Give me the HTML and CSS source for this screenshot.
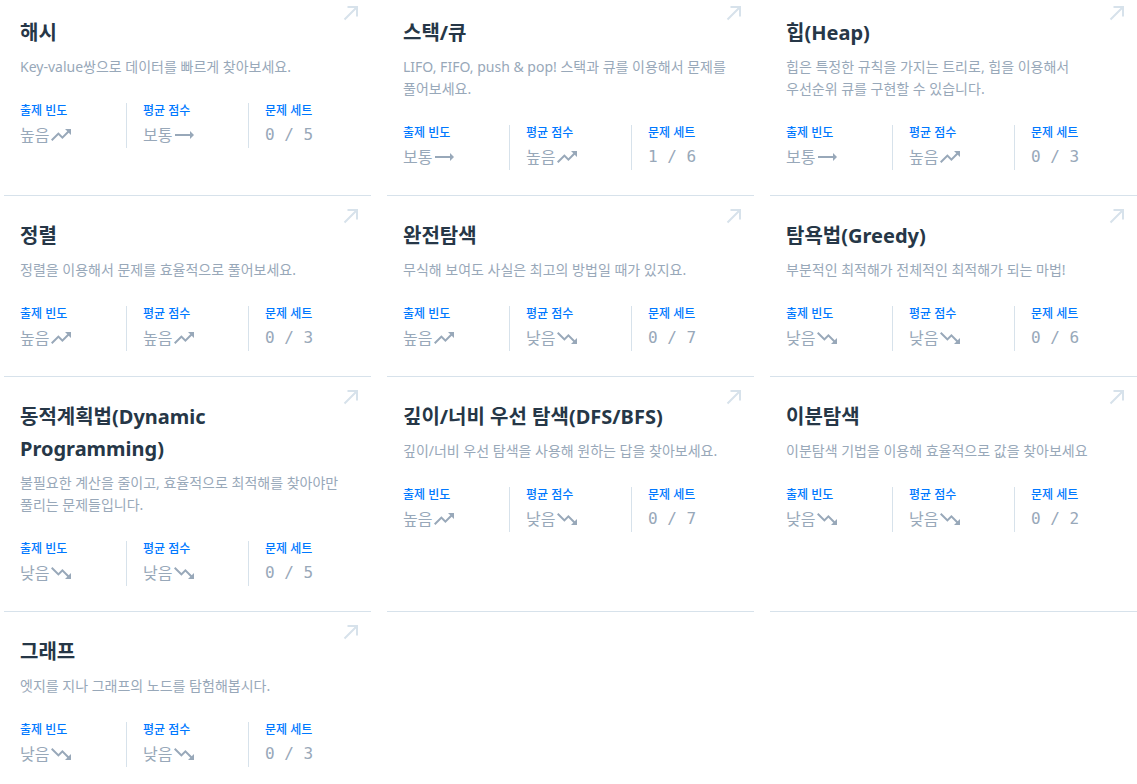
FILE: index.html
```html
<!DOCTYPE html>
<html lang="ko">
<head>
<meta charset="utf-8">
<title>문제 유형</title>
<link rel="stylesheet" href="styles.css">
</head>
<body>
<svg width="0" height="0" class="defs">
  <defs>
    <symbol id="ic-up" viewBox="0 0 24 24"><path d="M16 6l2.29 2.29-4.88 4.88-4-4L2 16.59 3.41 18l6-6 4 4 6.3-6.29L22 12V6z"/></symbol>
    <symbol id="ic-down" viewBox="0 0 24 24"><path d="M16 18l2.29-2.29-4.88-4.88-4 4L2 7.41 3.41 6l6 6 4-4 6.3 6.29L22 12v6z"/></symbol>
    <symbol id="ic-flat" viewBox="0 0 24 24"><path d="M22 12l-4-4v3H3v2h15v3z"/></symbol>
    <symbol id="ic-link" viewBox="0 0 16 16"><path d="M1.5 14.5L14 2M4.5 2H14V11.5" fill="none" stroke-width="2"/></symbol>
  </defs>
</svg>
<main class="grid">
  <a class="card">
    <svg class="link"><use href="#ic-link"/></svg>
    <h3 class="title">해시</h3>
    <p class="desc">Key-value쌍으로 데이터를 빠르게 찾아보세요.</p>
    <div class="stats">
      <div class="stat"><div class="label">출제 빈도</div><div class="value">높음<svg class="trend"><use href="#ic-up"/></svg></div></div>
      <div class="stat"><div class="label">평균 점수</div><div class="value">보통<svg class="trend"><use href="#ic-flat"/></svg></div></div>
      <div class="stat"><div class="label">문제 세트</div><div class="value mono">0 / 5</div></div>
    </div>
  </a>
  <a class="card">
    <svg class="link"><use href="#ic-link"/></svg>
    <h3 class="title">스택/큐</h3>
    <p class="desc">LIFO, FIFO, push &amp; pop! 스택과 큐를 이용해서 문제를 풀어보세요.</p>
    <div class="stats">
      <div class="stat"><div class="label">출제 빈도</div><div class="value">보통<svg class="trend"><use href="#ic-flat"/></svg></div></div>
      <div class="stat"><div class="label">평균 점수</div><div class="value">높음<svg class="trend"><use href="#ic-up"/></svg></div></div>
      <div class="stat"><div class="label">문제 세트</div><div class="value mono">1 / 6</div></div>
    </div>
  </a>
  <a class="card">
    <svg class="link"><use href="#ic-link"/></svg>
    <h3 class="title">힙(Heap)</h3>
    <p class="desc">힙은 특정한 규칙을 가지는 트리로, 힙을 이용해서 우선순위 큐를 구현할 수 있습니다.</p>
    <div class="stats">
      <div class="stat"><div class="label">출제 빈도</div><div class="value">보통<svg class="trend"><use href="#ic-flat"/></svg></div></div>
      <div class="stat"><div class="label">평균 점수</div><div class="value">높음<svg class="trend"><use href="#ic-up"/></svg></div></div>
      <div class="stat"><div class="label">문제 세트</div><div class="value mono">0 / 3</div></div>
    </div>
  </a>
  <a class="card">
    <svg class="link"><use href="#ic-link"/></svg>
    <h3 class="title">정렬</h3>
    <p class="desc">정렬을 이용해서 문제를 효율적으로 풀어보세요.</p>
    <div class="stats">
      <div class="stat"><div class="label">출제 빈도</div><div class="value">높음<svg class="trend"><use href="#ic-up"/></svg></div></div>
      <div class="stat"><div class="label">평균 점수</div><div class="value">높음<svg class="trend"><use href="#ic-up"/></svg></div></div>
      <div class="stat"><div class="label">문제 세트</div><div class="value mono">0 / 3</div></div>
    </div>
  </a>
  <a class="card">
    <svg class="link"><use href="#ic-link"/></svg>
    <h3 class="title">완전탐색</h3>
    <p class="desc">무식해 보여도 사실은 최고의 방법일 때가 있지요.</p>
    <div class="stats">
      <div class="stat"><div class="label">출제 빈도</div><div class="value">높음<svg class="trend"><use href="#ic-up"/></svg></div></div>
      <div class="stat"><div class="label">평균 점수</div><div class="value">낮음<svg class="trend"><use href="#ic-down"/></svg></div></div>
      <div class="stat"><div class="label">문제 세트</div><div class="value mono">0 / 7</div></div>
    </div>
  </a>
  <a class="card">
    <svg class="link"><use href="#ic-link"/></svg>
    <h3 class="title">탐욕법(Greedy)</h3>
    <p class="desc">부분적인 최적해가 전체적인 최적해가 되는 마법!</p>
    <div class="stats">
      <div class="stat"><div class="label">출제 빈도</div><div class="value">낮음<svg class="trend"><use href="#ic-down"/></svg></div></div>
      <div class="stat"><div class="label">평균 점수</div><div class="value">낮음<svg class="trend"><use href="#ic-down"/></svg></div></div>
      <div class="stat"><div class="label">문제 세트</div><div class="value mono">0 / 6</div></div>
    </div>
  </a>
  <a class="card">
    <svg class="link"><use href="#ic-link"/></svg>
    <h3 class="title">동적계획법(Dynamic Programming)</h3>
    <p class="desc">불필요한 계산을 줄이고, 효율적으로 최적해를 찾아야만 풀리는 문제들입니다.</p>
    <div class="stats">
      <div class="stat"><div class="label">출제 빈도</div><div class="value">낮음<svg class="trend"><use href="#ic-down"/></svg></div></div>
      <div class="stat"><div class="label">평균 점수</div><div class="value">낮음<svg class="trend"><use href="#ic-down"/></svg></div></div>
      <div class="stat"><div class="label">문제 세트</div><div class="value mono">0 / 5</div></div>
    </div>
  </a>
  <a class="card">
    <svg class="link"><use href="#ic-link"/></svg>
    <h3 class="title">깊이/너비 우선 탐색(DFS/BFS)</h3>
    <p class="desc">깊이/너비 우선 탐색을 사용해 원하는 답을 찾아보세요.</p>
    <div class="stats">
      <div class="stat"><div class="label">출제 빈도</div><div class="value">높음<svg class="trend"><use href="#ic-up"/></svg></div></div>
      <div class="stat"><div class="label">평균 점수</div><div class="value">낮음<svg class="trend"><use href="#ic-down"/></svg></div></div>
      <div class="stat"><div class="label">문제 세트</div><div class="value mono">0 / 7</div></div>
    </div>
  </a>
  <a class="card">
    <svg class="link"><use href="#ic-link"/></svg>
    <h3 class="title">이분탐색</h3>
    <p class="desc">이분탐색 기법을 이용해 효율적으로 값을 찾아보세요</p>
    <div class="stats">
      <div class="stat"><div class="label">출제 빈도</div><div class="value">낮음<svg class="trend"><use href="#ic-down"/></svg></div></div>
      <div class="stat"><div class="label">평균 점수</div><div class="value">낮음<svg class="trend"><use href="#ic-down"/></svg></div></div>
      <div class="stat"><div class="label">문제 세트</div><div class="value mono">0 / 2</div></div>
    </div>
  </a>
  <a class="card">
    <svg class="link"><use href="#ic-link"/></svg>
    <h3 class="title">그래프</h3>
    <p class="desc">엣지를 지나 그래프의 노드를 탐험해봅시다.</p>
    <div class="stats">
      <div class="stat"><div class="label">출제 빈도</div><div class="value">낮음<svg class="trend"><use href="#ic-down"/></svg></div></div>
      <div class="stat"><div class="label">평균 점수</div><div class="value">낮음<svg class="trend"><use href="#ic-down"/></svg></div></div>
      <div class="stat"><div class="label">문제 세트</div><div class="value mono">0 / 3</div></div>
    </div>
  </a>
</main>
</body>
</html>
```

FILE: styles.css
```css
* { box-sizing: border-box; }
html, body { margin: 0; padding: 0; background: #ffffff; }
body {
  font-family: "Noto Sans", "Noto Sans CJK KR", sans-serif;
  color: #263747;
  overflow: hidden;
}
.defs { position: absolute; width: 0; height: 0; overflow: hidden; }
.grid {
  display: grid;
  grid-template-columns: repeat(3, 367px);
  column-gap: 16px;
  padding-left: 4px;
  margin-top: -7px;
}
.card {
  position: relative;
  display: block;
  padding: 24px 16px 25px;
  border-bottom: 1px solid #d7e2eb;
  text-decoration: none;
  color: inherit;
}
.link {
  position: absolute;
  top: 12px;
  right: 12px;
  width: 16px;
  height: 16px;
  stroke: #d7e2eb;
  fill: none;
}
.title {
  margin: 0;
  padding-right: 40px;
  font-size: 20px;
  line-height: 32px;
  font-weight: 700;
  color: #263747;
  word-break: keep-all;
}
.desc {
  margin: 7px 0 0;
  font-size: 14px;
  line-height: 22px;
  color: #98a8b9;
  word-break: keep-all;
}
.stats {
  display: flex;
  margin-top: 25px;
}
.stat {
  flex: 0 0 122px;
  padding: 0 16px 1px;
  border-right: 1px solid #d7e2eb;
}
.stat:first-child { flex-basis: 107px; padding-left: 0; }
.stat:last-child { border-right: none; }
.label {
  font-size: 12px;
  line-height: 16px;
  font-weight: 500;
  color: #0078ff;
}
.value {
  display: flex;
  align-items: center;
  margin-top: 4px;
  height: 24px;
  font-size: 16px;
  line-height: 24px;
  color: #98a8b9;
}
.value.mono {
  font-family: "DejaVu Sans Mono", "Liberation Mono", monospace;
  font-size: 16px;
  white-space: pre;
}
.trend {
  width: 24px;
  height: 24px;
  fill: #98a8b9;
  margin-left: 0;
}
```
